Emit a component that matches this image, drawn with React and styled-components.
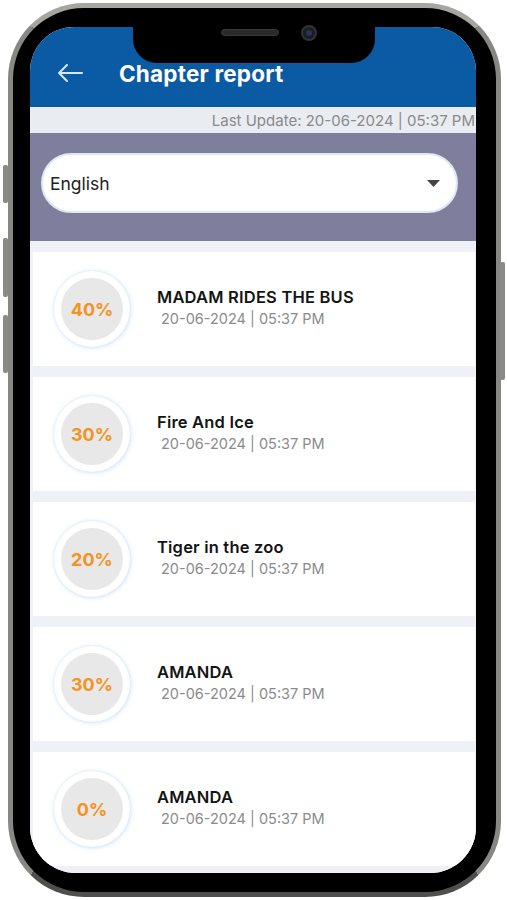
import React from 'react';
import styled, { createGlobalStyle } from 'styled-components';

const Global = createGlobalStyle`
  html, body { margin: 0; padding: 0; background: #ffffff; }
  body { font-family: Inter, "Noto Sans", "DejaVu Sans", sans-serif; }
  * { box-sizing: border-box; }
`;

const Stage = styled.div`
  width: 507px;
  height: 900px;
  padding: 3px 6px 3px 8px;
`;

const Frame = styled.div`
  position: relative;
  width: 493px;
  height: 894px;
  border: 5px solid #878783;
  border-top-color: #a6a5a0;
  border-bottom-color: #4f4f4c;
  border-radius: 76px;
  background: #000;
  padding: 19px 20px 19px 17px;
`;

const SideButton = styled.div`
  position: absolute;
  width: 5px;
  background: #8a8a86;
  border-radius: 2px;
  ${(p) => (p.$right ? 'right: -9px;' : 'left: -10px;')}
  top: ${(p) => p.$top}px;
  height: ${(p) => p.$h}px;
`;

const Notch = styled.div`
  position: absolute;
  left: 120px;
  top: 0;
  width: 242px;
  height: 55px;
  background: #000;
  border-radius: 0 0 24px 24px;
  display: flex;
  align-items: center;
  justify-content: center;
  gap: 22px;
  padding: 0 0 6px 30px;
  z-index: 2;
`;

const Speaker = styled.div`
  width: 58px;
  height: 7px;
  border-radius: 4px;
  background: #2a2a2a;
  border: 1px solid #3a3a3a;
`;

const Camera = styled.div`
  width: 16px;
  height: 16px;
  border-radius: 50%;
  background: #1b1d24;
  border: 2px solid #333;
  display: flex;
  align-items: center;
  justify-content: center;
  &::after {
    content: '';
    width: 6px;
    height: 6px;
    border-radius: 50%;
    background: #23365a;
  }
`;

const Screen = styled.div`
  width: 100%;
  height: 100%;
  border-radius: 44px 44px 46px 46px;
  overflow: hidden;
  background: #ffffff;
  display: flex;
  flex-direction: column;
`;

const Header = styled.header`
  height: 80px;
  flex: none;
  background: #0b5aa4;
  display: flex;
  align-items: center;
  padding: 12px 0 0 27px;
  gap: 36px;
`;

const BackIcon = styled.svg`
  width: 26px;
  height: 20px;
  display: block;
`;

const Title = styled.h1`
  margin: 0;
  color: #ffffff;
  font-size: 22.5px;
  font-weight: 700;
  letter-spacing: 0.2px;
`;

const UpdateBar = styled.div`
  height: 26px;
  flex: none;
  background: #e9ecf1;
  display: flex;
  justify-content: flex-end;
  align-items: center;
  white-space: nowrap;
  color: #8a8a8a;
  font-size: 15px;
  padding-right: 1px;
`;

const FilterArea = styled.div`
  height: 108px;
  flex: none;
  background: #7f7e9c;
  padding: 20px 18px 0 11px;
`;

const Select = styled.div`
  height: 60px;
  border-radius: 30px;
  background: #ffffff;
  border: 2px solid #dfe7f1;
  display: flex;
  align-items: center;
  justify-content: space-between;
  padding: 0 16px 0 7px;
  font-size: 17.5px;
  color: #222;
`;

const Caret = styled.svg`
  width: 13px;
  height: 7px;
  display: block;
`;

const List = styled.div`
  flex: 1;
  background: #eef1f5;
  padding: 11px 1px 0 3px;
  display: flex;
  flex-direction: column;
  gap: 11px;
`;

const Card = styled.div`
  height: 114px;
  flex: none;
  background: #ffffff;
  display: flex;
  align-items: center;
  padding-left: 21px;
  gap: 27px;
`;

const Ring = styled.div`
  width: 76px;
  height: 76px;
  border-radius: 50%;
  background: #ffffff;
  box-shadow: 0 0 3px rgba(140, 185, 235, 0.35), 1px 1px 5px rgba(140, 185, 235, 0.3);
  display: flex;
  align-items: center;
  justify-content: center;
  flex: none;
`;

const Inner = styled.div`
  width: 62px;
  height: 62px;
  border-radius: 50%;
  background: #e8e8e8;
  display: flex;
  align-items: center;
  justify-content: center;
  color: #f39322;
  font-size: 18px;
  font-weight: 700;
`;

const Info = styled.div`
  display: flex;
  flex-direction: column;
  gap: 3px;
  margin-top: -4px;
`;

const ChapterName = styled.div`
  font-size: 16.5px;
  font-weight: 600;
  color: #141414;
  letter-spacing: 0.2px;
`;

const ChapterDate = styled.div`
  font-size: 14.5px;
  color: #8b8b8b;
  padding-left: 4px;
`;

const chapters = [
  { pct: '40%', name: 'MADAM RIDES THE BUS' },
  { pct: '30%', name: 'Fire And Ice' },
  { pct: '20%', name: 'Tiger in the zoo' },
  { pct: '30%', name: 'AMANDA' },
  { pct: '0%', name: 'AMANDA' },
];

export default function App() {
  return (
    <Stage>
      <Global />
      <Frame>
        <SideButton $top={157} $h={38} />
        <SideButton $top={230} $h={59} />
        <SideButton $top={307} $h={58} />
        <SideButton $right $top={254} $h={118} />
        <Notch>
          <Speaker />
          <Camera />
        </Notch>
        <Screen>
          <Header>
            <BackIcon viewBox="0 0 26 20" fill="none">
              <path d="M25 10H2M10 2L2 10L10 18" stroke="#dbe6f5" strokeWidth="2" strokeLinecap="round" strokeLinejoin="round" />
            </BackIcon>
            <Title>Chapter report</Title>
          </Header>
          <UpdateBar>Last Update: 20-06-2024 | 05:37 PM</UpdateBar>
          <FilterArea>
            <Select>
              <span>English</span>
              <Caret viewBox="0 0 13 7">
                <path d="M0 0H13L6.5 7Z" fill="#444" />
              </Caret>
            </Select>
          </FilterArea>
          <List>
            {chapters.map((c, i) => (
              <Card key={i}>
                <Ring>
                  <Inner>{c.pct}</Inner>
                </Ring>
                <Info>
                  <ChapterName>{c.name}</ChapterName>
                  <ChapterDate>20-06-2024 | 05:37 PM</ChapterDate>
                </Info>
              </Card>
            ))}
          </List>
        </Screen>
      </Frame>
    </Stage>
  );
}
